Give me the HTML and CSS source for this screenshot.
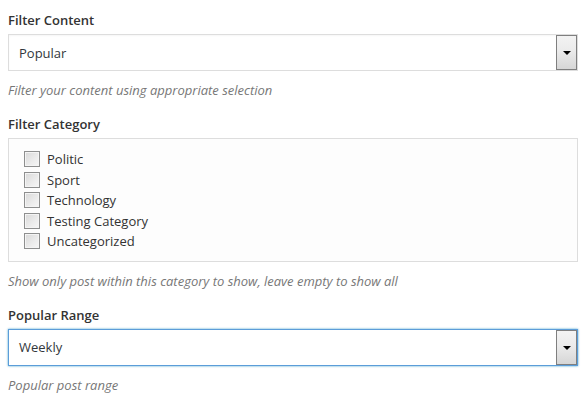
FILE: index.html
```html
<!DOCTYPE html>
<html lang="en">
<head>
<meta charset="utf-8">
<title>Widget options</title>
<link rel="stylesheet" href="styles.css">
</head>
<body>
<div class="form">
  <div class="field">
    <label class="label">Filter Content</label>
    <div class="select">
      <span class="select-value">Popular</span>
      <span class="select-btn"><span class="arrow"></span></span>
    </div>
    <p class="desc">Filter your content using appropriate selection</p>
  </div>

  <div class="field">
    <label class="label">Filter Category</label>
    <div class="checklist">
      <label class="check"><span class="box"></span>Politic</label>
      <label class="check"><span class="box"></span>Sport</label>
      <label class="check"><span class="box"></span>Technology</label>
      <label class="check"><span class="box"></span>Testing Category</label>
      <label class="check"><span class="box"></span>Uncategorized</label>
    </div>
    <p class="desc">Show only post within this category to show, leave empty to show all</p>
  </div>

  <div class="field">
    <label class="label">Popular Range</label>
    <div class="select focused">
      <span class="select-value">Weekly</span>
      <span class="select-btn"><span class="arrow"></span></span>
    </div>
    <p class="desc">Popular post range</p>
  </div>
</div>
</body>
</html>
```

FILE: styles.css
```css
html, body {
  margin: 0;
  padding: 0;
  background: #ffffff;
}

body {
  font-family: "Open Sans", "Liberation Sans", sans-serif;
  font-size: 13px;
  line-height: 18px;
  color: #444444;
}

.form {
  padding: 11px 10px 0 8px;
  display: flex;
  flex-direction: column;
  gap: 16px;
}

.field {
  display: flex;
  flex-direction: column;
}

.label {
  display: block;
  font-weight: 600;
  color: #333333;
  margin-bottom: 5px;
}

.select {
  width: 570px;
  height: 37px;
  box-sizing: border-box;
  border: 1px solid #dddddd;
  background: #ffffff;
  display: flex;
  align-items: stretch;
  box-shadow: inset 0 1px 2px rgba(0, 0, 0, 0.04);
}

.select.focused {
  border-color: #5b9dd9;
  box-shadow: 0 0 2px rgba(30, 140, 190, 0.8);
}

.select-value {
  flex: 1;
  display: flex;
  align-items: center;
  padding-left: 10px;
  color: #32373c;
}

.select-btn {
  width: 21px;
  box-sizing: border-box;
  border: 1px solid #7f7f7f;
  background: linear-gradient(to bottom, #f3f3f3 0%, #ebebeb 45%, #d6d6d6 100%);
  display: flex;
  align-items: center;
  justify-content: center;
}

.arrow {
  width: 0;
  height: 0;
  border-left: 4px solid transparent;
  border-right: 4px solid transparent;
  border-top: 4px solid #000000;
  margin-top: 1px;
}

.desc {
  margin: 10px 0 0 0;
  font-style: italic;
  color: #777777;
}

.checklist {
  width: 570px;
  box-sizing: border-box;
  border: 1px solid #dddddd;
  background: #fdfdfd;
  padding: 10px 15px 9px;
  display: flex;
  flex-direction: column;
}

.check {
  display: flex;
  align-items: center;
  height: 20.5px;
  color: #333333;
}

.box {
  width: 16px;
  height: 16px;
  box-sizing: border-box;
  border: 1px solid #8e8f8f;
  background: linear-gradient(135deg, #d8d8d8 0%, #ececec 60%, #f6f6f6 100%);
  box-shadow: inset 0 0 0 1px #f4f4f4;
  margin-right: 7px;
  flex: none;
}
```
